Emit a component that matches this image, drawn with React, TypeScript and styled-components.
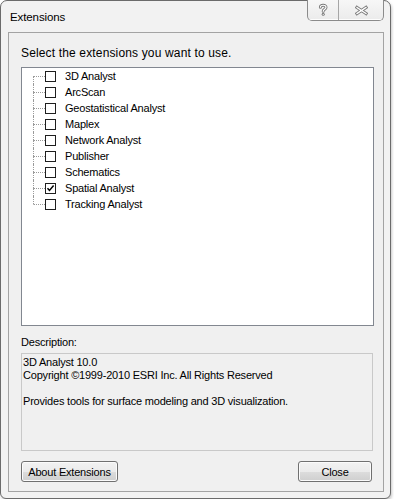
import React from "react";
import styled, { createGlobalStyle } from "styled-components";

const GlobalStyle = createGlobalStyle`
  html, body {
    margin: 0;
    padding: 0;
    background: #ffffff;
  }
  body {
    font-family: "Liberation Sans", Arial, sans-serif;
    font-size: 11px;
    color: #000000;
  }
`;

const Window = styled.div`
  width: 391px;
  height: 499px;
  box-sizing: border-box;
  border: 1px solid #6b6b6b;
  border-radius: 7px 7px 6px 6px;
  background: #f2f2f2;
  display: flex;
  flex-direction: column;
  box-shadow: 1px 2px 3px rgba(0, 0, 0, 0.22);
`;

const TitleBar = styled.div`
  height: 31px;
  display: flex;
  align-items: flex-start;
  padding: 0 6px 0 9px;
`;

const Title = styled.div`
  margin-top: 9px;
  line-height: 14px;
  font-size: 11.5px;
  letter-spacing: -0.1px;
`;

const CaptionGroup = styled.div`
  margin-left: auto;
  margin-top: -1px;
  display: flex;
  height: 21px;
  box-sizing: border-box;
  border: 1px solid #8b8b8b;
  border-top: none;
  border-radius: 0 0 5px 5px;
  overflow: hidden;
  background: linear-gradient(#f7f7f7, #ebebeb);
`;

const CaptionButton = styled.div<{ $width: number; $divider?: boolean }>`
  width: ${(p) => p.$width}px;
  display: flex;
  align-items: center;
  justify-content: center;
  border-right: ${(p) => (p.$divider ? "1px solid #a6a6a6" : "none")};
  box-shadow: inset 0 -1px 0 #fdfdfd;
`;

const Client = styled.div`
  margin: 0 6px 6px 7px;
  height: 460px;
  box-sizing: border-box;
  border: 1px solid #a3a3a3;
  background: #f0f0f0;
  padding: 13px 9px 0 12px;
  display: flex;
  flex-direction: column;
`;

const Prompt = styled.div`
  line-height: 14px;
  font-size: 12px;
  letter-spacing: 0.15px;
`;

const ListBox = styled.div`
  margin-top: 7px;
  height: 259px;
  box-sizing: border-box;
  border: 1px solid #828790;
  background: #ffffff;
  display: flex;
  flex-direction: column;
`;

const TreeRow = styled.div`
  height: 16px;
  display: flex;
  align-items: center;
  padding-left: 11px;
`;

const Connector = styled.div`
  width: 12px;
  height: 16px;
  display: flex;
  flex-direction: column;
`;

const Stem = styled.span<{ $line: boolean; $branch?: boolean }>`
  display: block;
  height: 8px;
  box-sizing: border-box;
  border-left: 1px dotted ${(p) => (p.$line ? "#9a9a9a" : "transparent")};
  border-top: ${(p) => (p.$branch ? "1px dotted #9a9a9a" : "none")};
`;

const CheckBox = styled.span`
  width: 11px;
  height: 11px;
  box-sizing: border-box;
  border: 1px solid #1e1e1e;
  background: #ffffff;
  display: flex;
  align-items: center;
  justify-content: center;
`;

const ItemLabel = styled.span`
  margin-left: 9px;
  line-height: 16px;
  letter-spacing: -0.2px;
`;

const SectionLabel = styled.div`
  margin-top: 9px;
  line-height: 14px;
  letter-spacing: -0.2px;
`;

const DescriptionBox = styled.div`
  margin-top: 4px;
  width: 352px;
  height: 98px;
  box-sizing: border-box;
  border: 1px solid #c9c9c9;
  background: #f0f0f0;
  padding: 2px 1px;
  line-height: 13px;
  letter-spacing: -0.2px;
`;

const DescLine = styled.div`
  min-height: 13px;
`;

const ButtonRow = styled.div`
  margin-top: 10px;
  display: flex;
  justify-content: space-between;
  padding-right: 2px;
`;

const PushButton = styled.button<{ $width: number }>`
  width: ${(p) => p.$width}px;
  height: 21px;
  box-sizing: border-box;
  border: 1px solid #707070;
  border-radius: 3px;
  padding: 0;
  font-family: "Liberation Sans", Arial, sans-serif;
  font-size: 11px;
  letter-spacing: -0.2px;
  color: #000000;
  background: linear-gradient(#f2f2f2 0%, #ebebeb 50%, #dddddd 50%, #cfcfcf 100%);
  box-shadow: inset 0 0 0 1px #fbfbfb;
`;

const extensions = [
  { name: "3D Analyst", checked: false },
  { name: "ArcScan", checked: false },
  { name: "Geostatistical Analyst", checked: false },
  { name: "Maplex", checked: false },
  { name: "Network Analyst", checked: false },
  { name: "Publisher", checked: false },
  { name: "Schematics", checked: false },
  { name: "Spatial Analyst", checked: true },
  { name: "Tracking Analyst", checked: false },
];

function HelpGlyph() {
  const d = "M2.4 4.2 C2.4 1.7, 8 1.5, 8 4.2 C8 6.1, 5.2 6.3, 5.2 8.3";
  return (
    <svg width="11" height="14" viewBox="0 0 11 14">
      <path d={d} fill="none" stroke="#7a7a7a" strokeWidth="3" strokeLinecap="round" />
      <path d={d} fill="none" stroke="#ffffff" strokeWidth="1.2" strokeLinecap="round" />
      <circle cx="5.2" cy="11.3" r="1.5" fill="#7a7a7a" />
      <circle cx="5.2" cy="11.3" r="0.6" fill="#ffffff" />
    </svg>
  );
}

function CloseGlyph() {
  const d = "M2 2.5 L11 8.5 M11 2.5 L2 8.5";
  return (
    <svg width="13" height="11" viewBox="0 0 13 11">
      <path d={d} fill="none" stroke="#7a7a7a" strokeWidth="3.2" strokeLinecap="square" />
      <path d={d} fill="none" stroke="#ffffff" strokeWidth="1.3" strokeLinecap="square" />
    </svg>
  );
}

function CheckMark() {
  return (
    <svg width="9" height="9" viewBox="0 0 9 9">
      <path d="M1.5 4.2 L3.5 6.4 L7.6 1.6" fill="none" stroke="#000000" strokeWidth="1.5" />
    </svg>
  );
}

export default function App() {
  return (
    <>
      <GlobalStyle />
      <Window>
        <TitleBar>
          <Title>Extensions</Title>
          <CaptionGroup>
            <CaptionButton $width={30} $divider>
              <HelpGlyph />
            </CaptionButton>
            <CaptionButton $width={44}>
              <CloseGlyph />
            </CaptionButton>
          </CaptionGroup>
        </TitleBar>
        <Client>
          <Prompt>Select the extensions you want to use.</Prompt>
          <ListBox>
            {extensions.map((ext, i) => (
              <TreeRow key={ext.name}>
                <Connector>
                  <Stem $line={i > 0} />
                  <Stem $line={i < extensions.length - 1} $branch />
                </Connector>
                <CheckBox>{ext.checked && <CheckMark />}</CheckBox>
                <ItemLabel>{ext.name}</ItemLabel>
              </TreeRow>
            ))}
          </ListBox>
          <SectionLabel>Description:</SectionLabel>
          <DescriptionBox>
            <DescLine>3D Analyst 10.0</DescLine>
            <DescLine>Copyright ©1999-2010 ESRI Inc. All Rights Reserved</DescLine>
            <DescLine />
            <DescLine>Provides tools for surface modeling and 3D visualization.</DescLine>
          </DescriptionBox>
          <ButtonRow>
            <PushButton $width={97}>About Extensions</PushButton>
            <PushButton $width={74}>Close</PushButton>
          </ButtonRow>
        </Client>
      </Window>
    </>
  );
}
